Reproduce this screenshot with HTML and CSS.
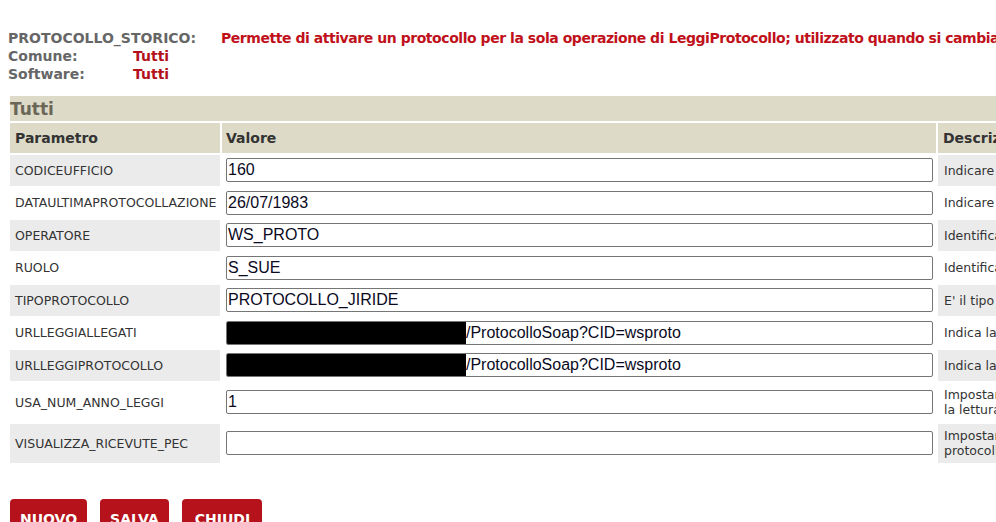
FILE: index.html
```html
<!DOCTYPE html>
<html lang="it">
<head>
<meta charset="utf-8">
<title>PROTOCOLLO_STORICO</title>
<link rel="stylesheet" href="styles.css">
</head>
<body>
<div class="info">
  <div class="info-line">
    <span class="info-key">PROTOCOLLO_STORICO:</span>
    <span class="info-desc">Permette di attivare un protocollo per la sola operazione di LeggiProtocollo; utilizzato quando si cambia protocollo</span>
  </div>
  <div class="info-grid">
    <span class="info-label">Comune:</span><span class="info-val">Tutti</span>
    <span class="info-label">Software:</span><span class="info-val">Tutti</span>
  </div>
</div>

<div class="panel">
  <table class="params">
    <colgroup><col class="c1"><col class="c2"><col class="c3"></colgroup>
    <thead>
      <tr><th colspan="3" class="title">Tutti</th></tr>
      <tr class="head"><th>Parametro</th><th>Valore</th><th>Descrizione</th></tr>
    </thead>
    <tbody>
      <tr class="odd"><td class="name">CODICEUFFICIO</td><td class="val"><div class="field">160</div></td><td class="desc">Indicare il codice dell'ufficio</td></tr>
      <tr><td class="name">DATAULTIMAPROTOCOLLAZIONE</td><td class="val"><div class="field">26/07/1983</div></td><td class="desc">Indicare la data dell'ultima protocollazione</td></tr>
      <tr class="odd"><td class="name">OPERATORE</td><td class="val"><div class="field">WS_PROTO</div></td><td class="desc">Identificativo dell'operatore</td></tr>
      <tr><td class="name">RUOLO</td><td class="val"><div class="field">S_SUE</div></td><td class="desc">Identificativo del ruolo</td></tr>
      <tr class="odd"><td class="name">TIPOPROTOCOLLO</td><td class="val"><div class="field">PROTOCOLLO_JIRIDE</div></td><td class="desc">E' il tipo di protocollo</td></tr>
      <tr><td class="name">URLLEGGIALLEGATI</td><td class="val"><div class="field"><span class="redact"></span>/ProtocolloSoap?CID=wsproto</div></td><td class="desc">Indica la url del servizio</td></tr>
      <tr class="odd"><td class="name">URLLEGGIPROTOCOLLO</td><td class="val"><div class="field"><span class="redact"></span>/ProtocolloSoap?CID=wsproto</div></td><td class="desc">Indica la url del servizio</td></tr>
      <tr class="tall"><td class="name">USA_NUM_ANNO_LEGGI</td><td class="val"><div class="field">1</div></td><td class="desc">Impostare a 1 per usare<br>la lettura per numero e anno</td></tr>
      <tr class="odd tall"><td class="name">VISUALIZZA_RICEVUTE_PEC</td><td class="val"><div class="field"></div></td><td class="desc">Impostare a 1 per visualizzare<br>protocolli e ricevute PEC</td></tr>
    </tbody>
  </table>
</div>

<div class="actions">
  <button class="btn">NUOVO</button>
  <button class="btn">SALVA</button>
  <button class="btn btn-wide">CHIUDI</button>
</div>
</body>
</html>
```

FILE: styles.css
```css
html { overflow: hidden; }
body {
  margin: 0;
  padding: 0 0 0 8px;
  font-family: "DejaVu Sans", sans-serif;
  font-size: 12px;
  color: #333;
  background: #fff;
  width: 1400px;
}
.info {
  padding-top: 29px;
  font-weight: bold;
  font-size: 14px;
  line-height: 18px;
}
.info-line {
  display: flex;
  white-space: nowrap;
}
.info-key {
  color: #666;
  width: 213px;
  flex: none;
}
.info-desc {
  color: #c0111b;
  letter-spacing: -0.45px;
}
.info-grid {
  display: grid;
  grid-template-columns: 125px auto;
  justify-content: start;
}
.info-label { color: #666; }
.info-val { color: #b3121b; }

.panel { margin-top: 13px; }
.params {
  table-layout: fixed;
  border-collapse: separate;
  border-spacing: 2px;
  width: 1292px;
  margin-top: -2px;
}
.c1 { width: 210px; }
.c2 { width: 714px; }
.c3 { width: 360px; }
.params th {
  background: #dddac8;
  text-align: left;
  font-weight: bold;
}
.params .title {
  height: 24px;
  padding: 1px 0 0;
  font-size: 17px;
  line-height: 20px;
  color: #6b6758;
}
.params .head th {
  height: 30px;
  padding: 0 5px;
  font-size: 14px;
  line-height: 18px;
  color: #333;
}
.params .head th:nth-child(2) { padding-left: 4px; }
.params td {
  padding: 0;
  height: 30.5px;
  vertical-align: middle;
  color: #333;
  background: #fff;
}
.params tr.tall td { height: 39px; }
.params tr.odd td { background: #ebebeb; }
.params tr.odd td.val { background: #fff; }
.params td.name {
  padding-left: 5px;
  font-size: 12.5px;
}
.params td.val { padding: 0 3px 0 4px; }
.params td.desc {
  padding: 0 6px;
  font-size: 12.5px;
  line-height: 15px;
  white-space: nowrap;
}
.field {
  height: 22px;
  border: 1px solid #767676;
  border-radius: 2px;
  background: #fff;
  font-family: "Liberation Sans", Arial, sans-serif;
  font-size: 16px;
  line-height: 22px;
  color: #0a0a1e;
  padding-left: 1px;
  display: flex;
  align-items: center;
  white-space: nowrap;
  overflow: hidden;
}
.redact {
  display: inline-block;
  width: 239px;
  height: 22px;
  margin-left: -1px;
  background: #000;
}

.actions {
  display: flex;
  gap: 13px;
  margin-top: 34px;
  padding-left: 2px;
}
.btn {
  background: #b5121b;
  color: #fff;
  border: none;
  border-radius: 4px;
  font-family: "DejaVu Sans", sans-serif;
  font-weight: bold;
  font-size: 14px;
  padding: 12px 10px;
  cursor: pointer;
}
.btn-wide { padding: 12px 12px 12px 13px; }
```
